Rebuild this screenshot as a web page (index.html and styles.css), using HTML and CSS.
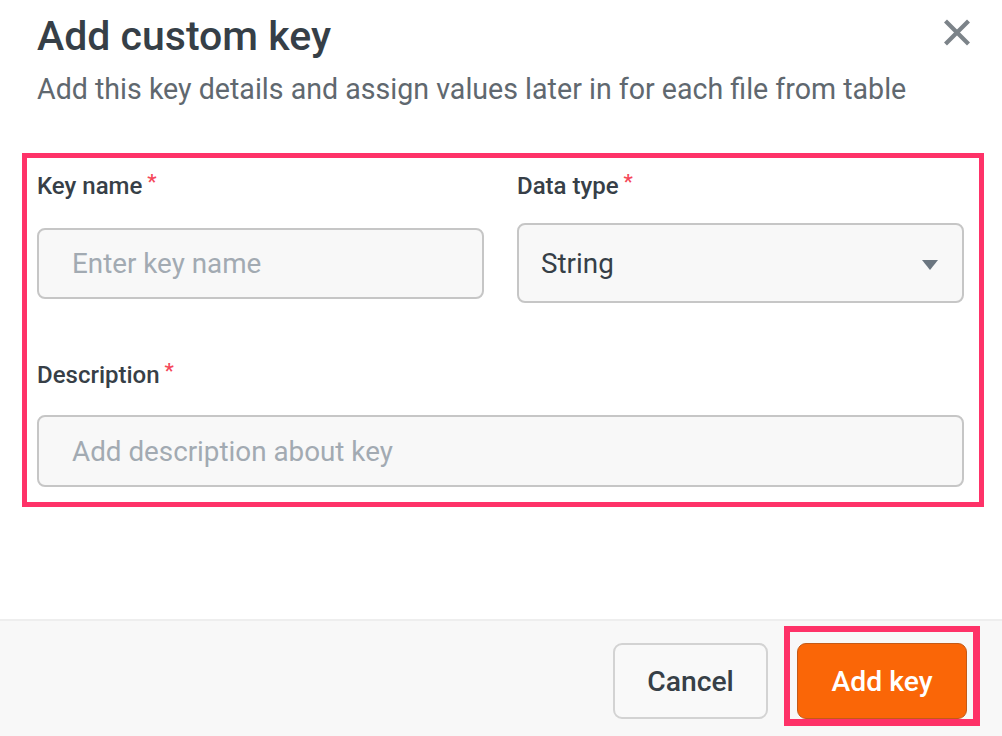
FILE: index.html
```html
<!DOCTYPE html>
<html>
<head>
<meta charset="utf-8">
<link rel="stylesheet" href="styles.css">
</head>
<body>
<div class="dialog">
  <div class="header">
    <div class="heading">
      <h1 class="title">Add custom key</h1>
      <p class="subtitle">Add this key details and assign values later in for each file from table</p>
    </div>
    <button class="close" aria-label="Close">
      <svg width="28" height="27" viewBox="0 0 28 27"><path d="M2.5 2 L25.5 25 M25.5 2 L2.5 25" stroke="#7c8389" stroke-width="4.2" fill="none"/></svg>
    </button>
  </div>

  <div class="form-box">
    <div class="grid">
      <label class="label">Key name<span class="req">*</span></label>
      <label class="label">Data type<span class="req">*</span></label>
      <div class="input">Enter key name</div>
      <div class="select"><span>String</span><span class="caret"></span></div>
    </div>
    <label class="label desc-label">Description<span class="req">*</span></label>
    <div class="input wide">Add description about key</div>
  </div>

  <div class="spacer"></div>

  <div class="footer">
    <button class="btn cancel">Cancel</button>
    <div class="mark">
      <button class="btn primary">Add key</button>
    </div>
  </div>
</div>
</body>
</html>
```
FILE: styles.css
```css
* { box-sizing: border-box; }
html, body { margin: 0; padding: 0; background: #fff; }
body {
  font-family: Roboto, "Noto Sans", Arial, sans-serif;
  width: 1002px;
  height: 736px;
  overflow: hidden;
}
.dialog {
  display: flex;
  flex-direction: column;
  height: 736px;
}
.header {
  display: flex;
  justify-content: space-between;
  align-items: flex-start;
  padding: 0 31px 0 37px;
}
.title {
  margin: 12px 0 0;
  font-size: 41px;
  line-height: 48px;
  font-weight: 500;
  color: #363f47;
}
.subtitle {
  margin: 13px 0 0;
  font-size: 28.6px;
  line-height: 32px;
  font-weight: 400;
  color: #60686f;
}
.close {
  margin-top: 19px;
  padding: 0;
  border: 0;
  background: none;
  width: 28px;
  height: 27px;
  display: block;
}
.close svg { display: block; }

.form-box {
  margin: 48px 0 0 22px;
  width: 962px;
  border: 5px solid #fe3268;
  padding: 14px 15px 15px 10px;
}
.grid {
  display: grid;
  grid-template-columns: 447px 447px;
  column-gap: 33px;
  grid-template-rows: 28px 80px;
  row-gap: 23px;
  align-items: center;
}
.label {
  display: block;
  font-size: 24px;
  line-height: 28px;
  font-weight: 500;
  color: #373f47;
}
.req {
  color: #f5485a;
  font-size: 21px;
  margin-left: 5px;
  vertical-align: top;
  line-height: 20px;
}
.input {
  height: 71px;
  border: 2px solid #c6c6c6;
  border-radius: 8px;
  background: #f8f8f8;
  padding-left: 33px;
  display: flex;
  align-items: center;
  font-size: 27.8px;
  color: #a2aab2;
}
.select {
  height: 80px;
  border: 2px solid #c6c6c6;
  border-radius: 8px;
  background: #f8f8f8;
  padding: 0 24px 0 22px;
  display: flex;
  align-items: center;
  justify-content: space-between;
  font-size: 27.8px;
  color: #363f47;
}
.caret {
  width: 0;
  height: 0;
  border-left: 8.5px solid transparent;
  border-right: 8.5px solid transparent;
  border-top: 10px solid #6b7680;
  margin-top: 3px;
}
.desc-label { margin-top: 58px; }
.input.wide { margin-top: 26px; height: 72px; }

.spacer { flex: 1; }

.footer {
  height: 117px;
  border-top: 2px solid #eeeeee;
  background: #f8f8f8;
  display: flex;
  justify-content: flex-end;
  align-items: flex-start;
  padding: 5px 22px 0 0;
}
.btn {
  font-family: Roboto, "Noto Sans", Arial, sans-serif;
  height: 76px;
  font-size: 28.3px;
  font-weight: 500;
  border-radius: 9px;
  padding: 0;
  cursor: pointer;
}
.cancel {
  margin-top: 17px;
  width: 155px;
  border: 2px solid #d3d3d3;
  background: #f9f9f9;
  color: #373f47;
  margin-right: 16px;
}
.mark {
  border: 6px solid #fe3268;
  border-right-width: 7px;
  border-bottom-width: 7px;
  padding: 11px 6px 0 7px;
}
.primary {
  display: block;
  width: 170px;
  background: #fa6607;
  border: 1px solid #c45a17;
  color: #fff;
}
```
